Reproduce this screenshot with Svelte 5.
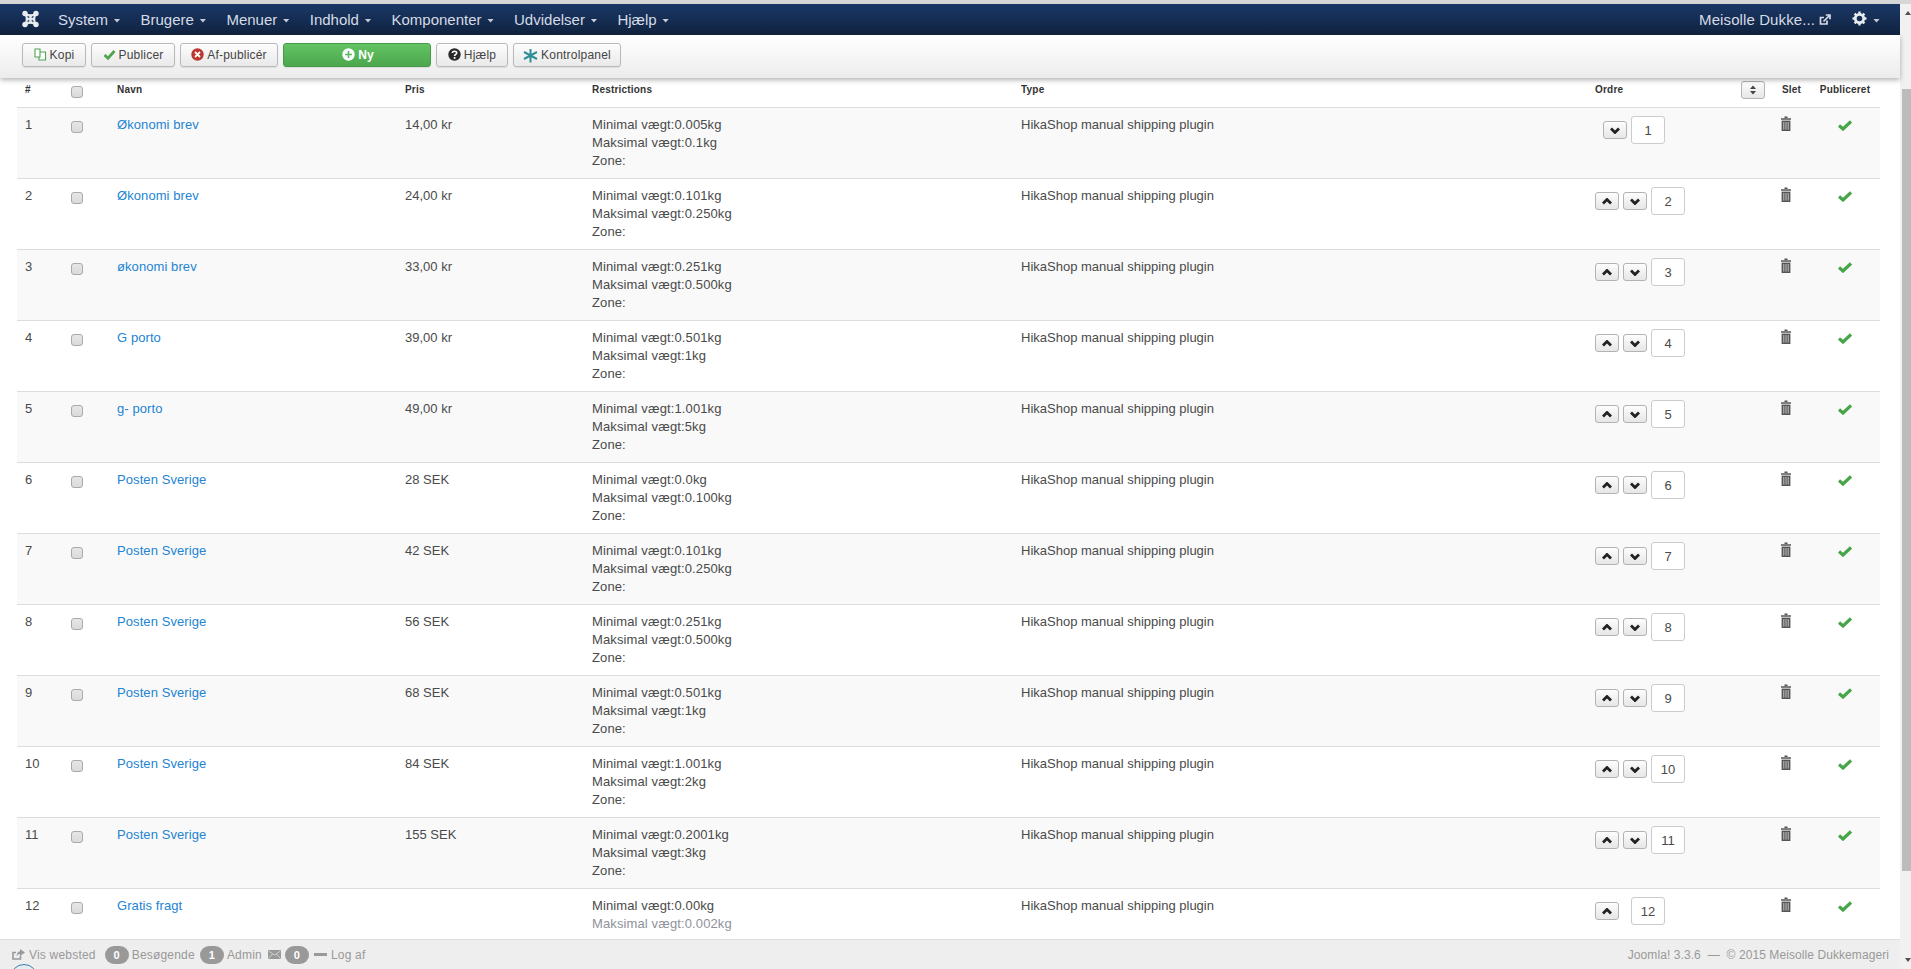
<script>
  const navItems = ["System", "Brugere", "Menuer", "Indhold", "Komponenter", "Udvidelser", "Hjælp"];

  const rows = [
    { name: "Økonomi brev", price: "14,00 kr", min: "0.005kg", max: "0.1kg" },
    { name: "Økonomi brev", price: "24,00 kr", min: "0.101kg", max: "0.250kg" },
    { name: "økonomi brev", price: "33,00 kr", min: "0.251kg", max: "0.500kg" },
    { name: "G porto", price: "39,00 kr", min: "0.501kg", max: "1kg" },
    { name: "g- porto", price: "49,00 kr", min: "1.001kg", max: "5kg" },
    { name: "Posten Sverige", price: "28 SEK", min: "0.0kg", max: "0.100kg" },
    { name: "Posten Sverige", price: "42 SEK", min: "0.101kg", max: "0.250kg" },
    { name: "Posten Sverige", price: "56 SEK", min: "0.251kg", max: "0.500kg" },
    { name: "Posten Sverige", price: "68 SEK", min: "0.501kg", max: "1kg" },
    { name: "Posten Sverige", price: "84 SEK", min: "1.001kg", max: "2kg" },
    { name: "Posten Sverige", price: "155 SEK", min: "0.2001kg", max: "3kg" },
    { name: "Gratis fragt", price: "", min: "0.00kg", max: "0.002kg" }
  ];
</script>

<div class="page">
  <div class="topline"></div>
  <div class="body">
    <div class="main">
      <nav class="navbar">
        <svg class="logo" viewBox="0 0 18 18" aria-hidden="true">
          <path d="M3 3 Q9 6.4 15 3 Q11.6 9 15 15 Q9 11.6 3 15 Q6.4 9 3 3 Z" fill="#e8ebf0" stroke="#e8ebf0" stroke-width="1.4" />
          <circle cx="3.2" cy="3.2" r="2.9" fill="#e8ebf0" />
          <circle cx="14.8" cy="3.2" r="2.9" fill="#e8ebf0" />
          <circle cx="3.2" cy="14.8" r="2.9" fill="#e8ebf0" />
          <circle cx="14.8" cy="14.8" r="2.9" fill="#e8ebf0" />
          <path d="M6 6 L7.6 7.6 M12 6 L10.4 7.6 M6 12 L7.6 10.4 M12 12 L10.4 10.4" stroke="#3a4c6e" stroke-width="1.5" fill="none" />
        </svg>
        <ul class="menu">
          {#each navItems as item}
            <li>{item}<span class="caret"></span></li>
          {/each}
        </ul>
        <div class="nav-right">
          <span class="site">Meisolle Dukke...</span>
          <svg class="ext" viewBox="0 0 12 12" aria-hidden="true">
            <path d="M8 6.5 V10 H1.5 V3.5 H5" fill="none" stroke="#d5dbe5" stroke-width="1.7" />
            <path d="M4.5 7.5 L10 2 M6.8 1 H11 V5.2" fill="none" stroke="#d5dbe5" stroke-width="1.7" />
          </svg>
          <svg class="gear" viewBox="0 0 14 14" aria-hidden="true">
            <circle cx="7" cy="7" r="3.9" fill="none" stroke="#e8ebf0" stroke-width="2.6" />
            <path d="M7 0.5 V13.5 M0.5 7 H13.5 M2.4 2.4 L11.6 11.6 M11.6 2.4 L2.4 11.6" stroke="#e8ebf0" stroke-width="2.2" stroke-dasharray="2.4 8.2 2.4" fill="none" />
          </svg>
          <span class="caret gear-caret"></span>
        </div>
      </nav>

      <div class="subhead">
        <button class="btn kopi">
          <svg viewBox="0 0 13 13" aria-hidden="true">
            <path d="M1 1 H6 V9 H1 Z M6 4 H11.5 V12 H5 V9" fill="#fff" stroke="#51a351" stroke-width="1.1" />
          </svg>
          Kopi
        </button>
        <button class="btn publicer">
          <svg viewBox="0 0 13 13" aria-hidden="true">
            <path d="M1.5 7 L5 10.3 L11.5 3" fill="none" stroke="#51a351" stroke-width="2.8" />
          </svg>
          Publicer
        </button>
        <button class="btn afpub">
          <svg viewBox="0 0 13 13" aria-hidden="true">
            <circle cx="6.5" cy="6.5" r="6.2" fill="#bd362f" />
            <path d="M4 4 L9 9 M9 4 L4 9" stroke="#fff" stroke-width="1.8" />
          </svg>
          Af-publicér
        </button>
        <button class="btn ny">
          <svg viewBox="0 0 13 13" aria-hidden="true">
            <circle cx="6.5" cy="6.5" r="6.2" fill="#fff" />
            <path d="M6.5 3 V10 M3 6.5 H10" stroke="#5cb85c" stroke-width="1.6" />
          </svg>
          Ny
        </button>
        <button class="btn hjaelp">
          <svg viewBox="0 0 13 13" aria-hidden="true">
            <circle cx="6.5" cy="6.5" r="6.2" fill="#2b2b2b" />
            <path d="M4.4 5 C4.4 2.6 8.7 2.6 8.7 5 C8.7 6.4 6.6 6.3 6.6 8" fill="none" stroke="#fff" stroke-width="1.6" />
            <path d="M6.6 9 V10.8" stroke="#fff" stroke-width="1.7" />
          </svg>
          Hjælp
        </button>
        <button class="btn panel">
          <svg viewBox="0 0 15 15" aria-hidden="true">
            <path d="M7.5 1 V14.5 M1 4 L14 11 M14 4 L1 11" fill="none" stroke="#2f8f97" stroke-width="2" />
          </svg>
          Kontrolpanel
        </button>
      </div>

      <div class="content">
        <table>
          <colgroup>
            <col class="c-num" />
            <col class="c-check" />
            <col class="c-name" />
            <col class="c-price" />
            <col class="c-restr" />
            <col class="c-type" />
            <col class="c-order" />
            <col class="c-del" />
            <col class="c-pub" />
          </colgroup>
          <thead>
            <tr>
              <th>#</th>
              <th><input type="checkbox" /></th>
              <th>Navn</th>
              <th>Pris</th>
              <th>Restrictions</th>
              <th>Type</th>
              <th>
                <div class="order-head">
                  <span>Ordre</span>
                  <button class="mini sort" aria-label="Sorter">
                    <svg viewBox="0 0 8 10" aria-hidden="true"><path d="M4 0.5 L7 4 H1 Z M4 9.5 L7 6 H1 Z" fill="#444" /></svg>
                  </button>
                </div>
              </th>
              <th class="slet">Slet</th>
              <th class="center">Publiceret</th>
            </tr>
          </thead>
          <tbody>
            {#each rows as row, i}
              <tr class:odd={i % 2 === 0}>
                <td>{i + 1}</td>
                <td><input type="checkbox" /></td>
                <td><a href="#top">{row.name}</a></td>
                <td>{row.price}</td>
                <td class="restr">
                  Minimal vægt:{row.min}<br />
                  {#if i === rows.length - 1}
                    <span class="fade">Maksimal vægt:{row.max}</span>
                  {:else}
                    Maksimal vægt:{row.max}<br />
                    Zone:
                  {/if}
                </td>
                <td>HikaShop manual shipping plugin</td>
                <td>
                  <div class="order" class:first={i === 0} class:last={i === rows.length - 1}>
                    {#if i > 0}
                      <button class="mini" aria-label="Op">
                        <svg viewBox="0 0 10 7" aria-hidden="true"><path d="M1 5.5 L5 1.5 L9 5.5" fill="none" stroke="#222" stroke-width="2.8" /></svg>
                      </button>
                    {/if}
                    {#if i < rows.length - 1}
                      <button class="mini" aria-label="Ned">
                        <svg viewBox="0 0 10 7" aria-hidden="true"><path d="M1 1.5 L5 5.5 L9 1.5" fill="none" stroke="#222" stroke-width="2.8" /></svg>
                      </button>
                    {/if}
                    <input class="order-input" type="text" value={i + 1} />
                  </div>
                </td>
                <td>
                  <svg class="trash" viewBox="0 0 10 15" aria-hidden="true">
                    <path d="M3.5 2 V0.6 H6.5 V2 M0 2.2 H10 V3.8 H0 Z" fill="#555" />
                    <path d="M0.6 4.6 H9.4 V15 H0.6 Z" fill="#555" />
                    <path d="M2.8 6 V13.6 M5 6 V13.6 M7.2 6 V13.6" stroke="#c4c4c4" stroke-width="1" />
                  </svg>
                </td>
                <td class="center">
                  <svg class="check" viewBox="0 0 14 11" aria-hidden="true">
                    <path d="M1 5.5 L5 9 L13 1.5" fill="none" stroke="#46a546" stroke-width="3.2" />
                  </svg>
                </td>
              </tr>
            {/each}
          </tbody>
        </table>
      </div>

      <footer class="status">
        <div class="status-left">
          <svg class="st-icon" viewBox="0 0 13 11" aria-hidden="true">
            <path d="M8.5 6.5 V10 H1 V3.5 H4" fill="none" stroke="#999" stroke-width="1.6" />
            <path d="M8 0 L13 3.5 L8 7 V5 C6 5 5 6 4.5 7.5 C4.5 4.5 6 2.5 8 2.2 Z" fill="#999" />
          </svg>
          <span>Vis websted</span>
          <span class="badge first-badge">0</span>
          <span>Besøgende</span>
          <span class="badge">1</span>
          <span>Admin</span>
          <svg class="st-icon mail" viewBox="0 0 13 9" aria-hidden="true">
            <rect width="13" height="9" fill="#999" />
            <path d="M0.5 1 L6.5 5 L12.5 1 M0.5 8.5 L4.5 4 M12.5 8.5 L8.5 4" fill="none" stroke="#ddd" stroke-width="0.8" />
          </svg>
          <span class="badge tight">0</span>
          <span class="minus"></span>
          <span>Log af</span>
        </div>
        <div class="status-right">Joomla! 3.3.6 &nbsp;— &nbsp;© 2015 Meisolle Dukkemageri</div>
        <span class="bubble"></span>
      </footer>
    </div>

    <div class="scrollbar">
      <span class="arrow up"></span>
      <div class="thumb"></div>
      <span class="arrow down"></span>
    </div>
  </div>
</div>

<style>
  :global(body) {
    margin: 0;
    padding: 0;
    font-family: "Liberation Sans", Arial, sans-serif;
    font-size: 13px;
    line-height: 18px;
    color: #4a4a4a;
    background: #fff;
  }
  .page {
    height: 969px;
    display: flex;
    flex-direction: column;
    overflow: hidden;
  }
  .topline {
    height: 4px;
    background: #d6d6d6;
  }
  .body {
    flex: 1;
    display: flex;
    min-height: 0;
  }
  .main {
    flex: 1;
    min-width: 0;
    display: flex;
    flex-direction: column;
    position: relative;
  }

  .navbar {
    height: 31px;
    flex: none;
    display: flex;
    align-items: center;
    padding-left: 22px;
    padding-right: 20px;
    background: linear-gradient(180deg, #1a3867 0%, #10223e 100%);
    color: #d5dbe5;
    font-size: 15px;
  }
  .logo {
    width: 17px;
    height: 18px;
    margin-top: -2px;
  }
  .menu {
    display: flex;
    list-style: none;
    margin: 0 0 0 9px;
    padding: 0;
  }
  .menu li {
    padding: 0 10px;
    white-space: nowrap;
    display: flex;
    align-items: center;
  }
  .caret {
    display: inline-block;
    width: 7px;
    height: 4px;
    margin-left: 5.5px;
    margin-top: 2px;
    background: #c5ccd8;
    clip-path: polygon(0 0, 100% 0, 50% 100%);
  }
  .nav-right {
    margin-left: auto;
    display: flex;
    align-items: center;
    white-space: nowrap;
  }
  .site {
    letter-spacing: 0.1px;
  }
  .ext {
    width: 12px;
    height: 12px;
    margin-left: 4px;
  }
  .gear {
    width: 15px;
    height: 15px;
    margin-left: 21px;
    margin-top: -3px;
  }
  .gear-caret {
    margin-left: 6px;
  }

  .subhead {
    height: 43px;
    flex: none;
    box-sizing: border-box;
    padding: 8px 0 0 22px;
    display: flex;
    gap: 5px;
    background: linear-gradient(180deg, #ffffff 0%, #ececec 100%);
    box-shadow: 0 2px 5px rgba(0, 0, 0, 0.3);
    position: relative;
    z-index: 1;
  }
  .btn {
    height: 24px;
    box-sizing: border-box;
    padding: 0;
    display: flex;
    align-items: center;
    justify-content: center;
    gap: 3px;
    font: 12px/16px "Liberation Sans", Arial, sans-serif;
    letter-spacing: 0.2px;
    color: #444;
    background: linear-gradient(180deg, #fdfdfd 0%, #e9e9e9 100%);
    border: 1px solid #b9b9b9;
    border-radius: 3px;
    box-shadow: 0 1px 1px rgba(0, 0, 0, 0.08);
  }
  .btn svg {
    width: 13px;
    height: 13px;
    margin-top: -2px;
  }
  .kopi { width: 64px; }
  .publicer { width: 84px; }
  .afpub { width: 98px; }
  .ny {
    width: 148px;
    padding-left: 2px;
    color: #fff;
    font-weight: bold;
    background: linear-gradient(180deg, #62c462 0%, #4da64d 100%);
    border-color: #4a994a;
  }
  .hjaelp { width: 72px; }
  .panel { width: 108px; }
  .panel svg {
    width: 15px;
    height: 15px;
    margin-top: 1px;
  }

  .content {
    flex: 1;
    min-height: 0;
    overflow: hidden;
    padding: 0 20px 0 17px;
    background: #fff;
  }
  table {
    width: 1863px;
    table-layout: fixed;
    border-collapse: collapse;
  }
  .c-num { width: 46px; }
  .c-check { width: 46px; }
  .c-name { width: 288px; }
  .c-price { width: 187px; }
  .c-restr { width: 429px; }
  .c-type { width: 574px; }
  .c-order { width: 186px; }
  .c-del { width: 37px; }
  .c-pub { width: 70px; }

  th {
    padding: 3px 8px 8px;
    font-size: 10px;
    letter-spacing: 0.2px;
    font-weight: bold;
    color: #333;
    text-align: left;
    vertical-align: top;
  }
  th.slet {
    padding-left: 9px;
    padding-right: 0;
  }
  td {
    height: 54px;
    padding: 8px;
    border-top: 1px solid #ddd;
    vertical-align: top;
    text-align: left;
  }
  tr.odd td {
    background: #f9f9f9;
  }
  .center {
    text-align: center;
  }
  .restr {
    letter-spacing: 0.12px;
  }
  .fade {
    color: #8f929a;
  }
  a {
    color: #2384d3;
    text-decoration: none;
    letter-spacing: 0.08px;
  }
  input[type="checkbox"] {
    appearance: none;
    display: block;
    box-sizing: border-box;
    width: 12px;
    height: 12px;
    margin: 5px 0 0;
    background: linear-gradient(180deg, #e6e6e6 0%, #dadada 100%);
    border: 1px solid #aaa;
    border-radius: 3px;
  }
  .order-head {
    display: flex;
    justify-content: space-between;
  }
  .mini {
    flex: none;
    width: 24px;
    height: 18px;
    box-sizing: border-box;
    padding: 0;
    display: flex;
    align-items: center;
    justify-content: center;
    background: linear-gradient(180deg, #fdfdfd 0%, #e6e6e6 100%);
    border: 1px solid #b3b3b3;
    border-radius: 3px;
  }
  .mini svg {
    width: 10px;
    height: 7px;
  }
  .sort svg {
    width: 8px;
    height: 10px;
  }
  .order {
    display: flex;
    align-items: center;
    gap: 4px;
  }
  .order.first {
    padding-left: 8px;
  }
  .order.last .mini {
    margin-right: 8px;
  }
  .order-input {
    width: 34px;
    height: 28px;
    box-sizing: border-box;
    padding: 0;
    text-align: center;
    font: 13px/18px "Liberation Sans", Arial, sans-serif;
    color: #4a4a4a;
    background: #fff;
    border: 1px solid #ccc;
    border-radius: 3px;
  }
  .trash {
    display: block;
    width: 10px;
    height: 15px;
  }
  .check {
    display: block;
    width: 14px;
    height: 11px;
    margin: 4px auto 0;
  }

  .status {
    height: 30px;
    flex: none;
    box-sizing: border-box;
    display: flex;
    align-items: center;
    justify-content: space-between;
    padding: 0 11px 0 12px;
    background: #eeeeee;
    border-top: 1px solid #ddd;
    color: #999;
    font-size: 12px;
    position: relative;
    z-index: 1;
  }
  .status-left {
    display: flex;
    align-items: center;
    gap: 3px;
    letter-spacing: 0.2px;
  }
  .status-right {
    letter-spacing: 0.08px;
  }
  .st-icon {
    width: 13px;
    height: 11px;
    margin-right: 1px;
  }
  .mail {
    height: 9px;
    margin-left: 3px;
    margin-right: 0;
  }
  .badge {
    width: 24px;
    height: 18px;
    margin-left: 2px;
    border-radius: 9px;
    background: #999;
    color: #fff;
    font-weight: bold;
    font-size: 11px;
    line-height: 18px;
    text-align: center;
  }
  .first-badge {
    margin-left: 6px;
  }
  .tight {
    margin-left: 1px;
  }
  .minus {
    width: 13px;
    height: 3px;
    margin: 0 1px 0 2px;
    background: #999;
  }
  .bubble {
    position: absolute;
    left: 10px;
    top: 24px;
    width: 28px;
    height: 28px;
    box-sizing: border-box;
    border: 1px solid #3e7ba8;
    border-radius: 50%;
    background: #e3edf4;
  }

  .scrollbar {
    flex: none;
    width: 11px;
    box-sizing: border-box;
    padding: 85px 0 0 2px;
    background: #f1f1f1;
    position: relative;
  }
  .thumb {
    height: 782px;
    background: #bcbcbc;
  }
  .arrow {
    position: absolute;
    left: 5px;
    width: 0;
    height: 0;
    border-left: 3.5px solid transparent;
    border-right: 3.5px solid transparent;
  }
  .arrow.up {
    top: 7px;
    border-bottom: 4px solid #505050;
  }
  .arrow.down {
    bottom: 7px;
    border-top: 4px solid #505050;
  }
</style>
